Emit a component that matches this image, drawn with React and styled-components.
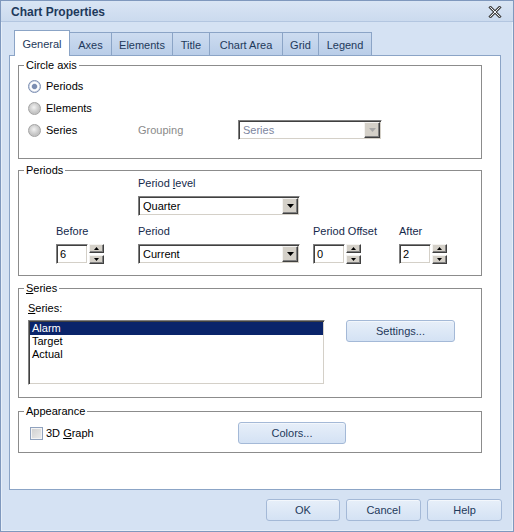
import React from "react";
import styled, { createGlobalStyle, css } from "styled-components";

const GlobalStyle = createGlobalStyle`
  html, body { margin: 0; padding: 0; background: #d5e2f3; }
  body { font-family: "Liberation Sans", Arial, sans-serif; font-size: 11px; }
  *, *::before, *::after { box-sizing: border-box; }
`;

const sunken = css`
  border: 1px solid;
  border-color: #808080 #ffffff #ffffff #808080;
  box-shadow: inset 1px 1px 0 #404040, inset -1px -1px 0 #d4d0c8;
`;

const raised = css`
  background: #d4d0c8;
  border: 1px solid;
  border-color: #f4f3f1 #404040 #404040 #f4f3f1;
  box-shadow: inset -1px -1px 0 #808080;
`;

const Window = styled.div`
  width: 514px;
  height: 532px;
  display: flex;
  flex-direction: column;
  background: #d5e2f3;
  border: 1px solid #7f98bd;
  box-shadow: inset 0 0 0 1px #e6eef8;
`;

const TitleBar = styled.div`
  height: 21px;
  flex: none;
  display: flex;
  align-items: center;
  justify-content: space-between;
  padding: 1px 11px 0 10px;
  background: linear-gradient(#d9e5f4, #cbdaee);
  border-bottom: 1px solid #b3c6e0;
`;

const Title = styled.span`
  font-size: 12px;
  font-weight: bold;
  color: #1e395b;
`;

const Body = styled.div`
  flex: 1;
  display: flex;
  flex-direction: column;
  padding: 8px 13px 0 8px;
`;

const TabStrip = styled.div`
  display: flex;
  align-items: flex-end;
  height: 25px;
  padding-left: 5px;
`;

const Tab = styled.div`
  display: flex;
  align-items: center;
  justify-content: center;
  width: ${(p) => p.$w}px;
  height: ${(p) => (p.$active ? "26px" : "23px")};
  margin-bottom: ${(p) => (p.$active ? "-1px" : "0")};
  margin-right: -1px;
  padding-top: ${(p) => (p.$active ? "0" : "1px")};
  border: 1px solid #8ba4c6;
  border-bottom: none;
  color: #1e395b;
  background: ${(p) =>
    p.$active ? "#ffffff" : "linear-gradient(#cddcf0, #b9cde8)"};
  position: relative;
  z-index: ${(p) => (p.$active ? 2 : 1)};
  white-space: nowrap;
`;

const Panel = styled.div`
  width: 492px;
  height: 435px;
  background: #ffffff;
  border: 1px solid #8ba4c6;
  padding: 9px 0 0 8px;
  display: flex;
  flex-direction: column;
  gap: 11px;
`;

const Group = styled.div`
  position: relative;
  width: 464px;
  border: 1px solid #8c8c8c;
  margin-top: ${(p) => p.$gapTop || 0}px;
  padding: ${(p) => p.$pad};
`;

const GroupTitle = styled.span`
  position: absolute;
  top: -7px;
  left: 5px;
  padding: 0 2px;
  line-height: 13px;
  background: #ffffff;
  color: #000;
`;

const Key = styled.span`
  text-decoration: underline;
`;

const RadioList = styled.div`
  display: flex;
  flex-direction: column;
`;

const Row = styled.div`
  display: flex;
  align-items: center;
  height: ${(p) => p.$h || 22}px;
`;

const Option = styled.label`
  display: flex;
  align-items: center;
  width: ${(p) => p.$w}px;
  color: #000;
`;

const RadioMark = styled.span`
  width: 13px;
  height: 13px;
  border-radius: 50%;
  margin-right: 5px;
  flex: none;
  border: 1px solid ${(p) => (p.$on ? "#7c8fb3" : "#a3a3a3")};
  background: ${(p) =>
    p.$on
      ? "radial-gradient(circle, #7b8db1 0 2.2px, #c3cde0 2.6px, #ffffff 3.4px, #ffffff 4.2px, #d6dce8 5px)"
      : "radial-gradient(circle at 45% 40%, #f2f2f2 0, #d8d8d8 3px, #c4c4c4 5.5px)"};
`;

const CheckMark = styled.span`
  width: 13px;
  height: 13px;
  margin-right: 3px;
  flex: none;
  border: 1px solid #90a2be;
  box-shadow: inset 0 0 0 1px #f4f4f4;
  background: linear-gradient(135deg, #cfcfcf, #ededed);
`;

const Muted = styled.span`
  width: ${(p) => p.$w}px;
  color: #8a8a8a;
`;

const SelectBox = styled.div`
  display: flex;
  width: ${(p) => p.$w}px;
  height: 20px;
  background: #ffffff;
  ${sunken};
  padding: 1px;
`;

const SelectValue = styled.span`
  flex: 1;
  padding-left: 3px;
  line-height: 16px;
  color: ${(p) => (p.$disabled ? "#7d86a0" : "#000")};
`;

const DropButton = styled.span`
  width: 16px;
  display: flex;
  align-items: center;
  justify-content: center;
  ${raised};
`;

const FieldGrid = styled.div`
  display: grid;
  grid-template-columns: 82px 175px 86px 1fr;
  row-gap: 9px;
`;

const Field = styled.div`
  display: flex;
  flex-direction: column;
  gap: 6px;
  grid-column: ${(p) => p.$col || "auto"};
`;

const FieldLabel = styled.span`
  line-height: 13px;
  color: ${(p) => p.$color || "#15294b"};
  margin-bottom: ${(p) => p.$mb || 0}px;
`;

const Spin = styled.div`
  display: flex;
  gap: 1px;
  height: 20px;
`;

const SpinInput = styled.span`
  width: 32px;
  height: 20px;
  background: #fff;
  ${sunken};
  padding-left: 3px;
  line-height: 18px;
  color: #000;
`;

const SpinButtons = styled.div`
  width: 15px;
  display: flex;
  flex-direction: column;
  justify-content: space-between;
`;

const SpinButton = styled.span`
  height: 9px;
  display: flex;
  align-items: center;
  justify-content: center;
  ${raised};
`;

const ListRow = styled.div`
  display: flex;
  align-items: flex-start;
`;

const ListBox = styled.div`
  width: 297px;
  height: 65px;
  background: #fff;
  ${sunken};
  padding: 1px;
  display: flex;
  flex-direction: column;
`;

const ListItem = styled.div`
  line-height: 13px;
  padding-left: 2px;
  color: ${(p) => (p.$selected ? "#fff" : "#000")};
  background: ${(p) => (p.$selected ? "#0a246a" : "transparent")};
`;

const Button = styled.button`
  width: ${(p) => p.$w}px;
  height: 22px;
  margin-left: ${(p) => p.$ml || 0}px;
  padding: 0;
  font: inherit;
  color: #1e395b;
  border: 1px solid #a4b9d7;
  border-radius: 3px;
  background: linear-gradient(#e7eff9, #d4e2f4);
  box-shadow: inset 0 1px 0 #f3f7fc;
`;

const Footer = styled.div`
  display: flex;
  justify-content: flex-end;
  gap: 6px;
  margin-top: 9px;
  margin-right: -2px;
`;

const CloseIcon = () => (
  <svg width="14" height="12" viewBox="0 0 14 12">
    <path d="M2.5 1.5 L11.5 10.5 M11.5 1.5 L2.5 10.5" stroke="#454545" strokeWidth="3" strokeLinecap="square" />
    <path d="M2.5 1.5 L11.5 10.5 M11.5 1.5 L2.5 10.5" stroke="#f4f6fa" strokeWidth="1" strokeLinecap="square" />
  </svg>
);

const Tri = ({ up, w = 7, color = "#000" }) => (
  <svg width={w} height={Math.ceil(w / 2)} viewBox={`0 0 ${w} ${Math.ceil(w / 2)}`}>
    {up ? (
      <path d={`M0 ${Math.ceil(w / 2)} L${w / 2} 0 L${w} ${Math.ceil(w / 2)} Z`} fill={color} />
    ) : (
      <path d={`M0 0 L${w} 0 L${w / 2} ${Math.ceil(w / 2)} Z`} fill={color} />
    )}
  </svg>
);

const Select = ({ value, width, disabled }) => (
  <SelectBox $w={width}>
    <SelectValue $disabled={disabled}>{value}</SelectValue>
    <DropButton>
      <Tri w={7} color={disabled ? "#a8a8a8" : "#000"} />
    </DropButton>
  </SelectBox>
);

const Spinner = ({ value }) => (
  <Spin>
    <SpinInput>{value}</SpinInput>
    <SpinButtons>
      <SpinButton>
        <Tri up w={5} />
      </SpinButton>
      <SpinButton>
        <Tri w={5} />
      </SpinButton>
    </SpinButtons>
  </Spin>
);

const tabs = [
  { label: "General", w: 56 },
  { label: "Axes", w: 43 },
  { label: "Elements", w: 62 },
  { label: "Title", w: 38 },
  { label: "Chart Area", w: 74 },
  { label: "Grid", w: 37 },
  { label: "Legend", w: 54 },
];

export default function App() {
  return (
    <>
      <GlobalStyle />
      <Window>
        <TitleBar>
          <Title>Chart Properties</Title>
          <CloseIcon />
        </TitleBar>
        <Body>
          <TabStrip>
            {tabs.map((t, i) => (
              <Tab key={t.label} $w={t.w} $active={i === 0}>
                {t.label}
              </Tab>
            ))}
          </TabStrip>
          <Panel>
            <Group $pad="9px 0 0 9px" style={{ height: 94 }}>
              <GroupTitle>Circle axis</GroupTitle>
              <RadioList>
                <Row>
                  <Option $w={110}>
                    <RadioMark $on />
                    <span>Periods</span>
                  </Option>
                </Row>
                <Row>
                  <Option $w={110}>
                    <RadioMark />
                    <span>Elements</span>
                  </Option>
                </Row>
                <Row>
                  <Option $w={110}>
                    <RadioMark />
                    <span>Series</span>
                  </Option>
                  <Muted $w={100}>Grouping</Muted>
                  <Select value="Series" width={144} disabled />
                </Row>
              </RadioList>
            </Group>

            <Group $pad="6px 0 11px 37px">
              <GroupTitle>Periods</GroupTitle>
              <FieldGrid>
                <Field $col={2}>
                  <FieldLabel>
                    Period <Key>l</Key>evel
                  </FieldLabel>
                  <Select value="Quarter" width={162} />
                </Field>
                <Field $col={1}>
                  <FieldLabel>Before</FieldLabel>
                  <Spinner value="6" />
                </Field>
                <Field>
                  <FieldLabel>Period</FieldLabel>
                  <Select value="Current" width={162} />
                </Field>
                <Field>
                  <FieldLabel>Period Offset</FieldLabel>
                  <Spinner value="0" />
                </Field>
                <Field>
                  <FieldLabel>After</FieldLabel>
                  <Spinner value="2" />
                </Field>
              </FieldGrid>
            </Group>

            <Group $pad="13px 0 12px 9px" $gapTop={1}>
              <GroupTitle>
                <Key>S</Key>eries
              </GroupTitle>
              <FieldLabel $mb={5} $color="#000" as="div">
                <Key>S</Key>eries:
              </FieldLabel>
              <ListRow>
                <ListBox>
                  <ListItem $selected>Alarm</ListItem>
                  <ListItem>Target</ListItem>
                  <ListItem>Actual</ListItem>
                </ListBox>
                <Button $w={109} $ml={21}>
                  Settings...
                </Button>
              </ListRow>
            </Group>

            <Group $pad="10px 0 8px 11px" $gapTop={2}>
              <GroupTitle>Appearance</GroupTitle>
              <Row $h={22}>
                <Option $w={208}>
                  <CheckMark />
                  <span>
                    3D <Key>G</Key>raph
                  </span>
                </Option>
                <Button $w={108}>Colors...</Button>
              </Row>
            </Group>
          </Panel>
          <Footer>
            <Button $w={74}>OK</Button>
            <Button $w={75}>Cancel</Button>
            <Button $w={75}>Help</Button>
          </Footer>
        </Body>
      </Window>
    </>
  );
}
